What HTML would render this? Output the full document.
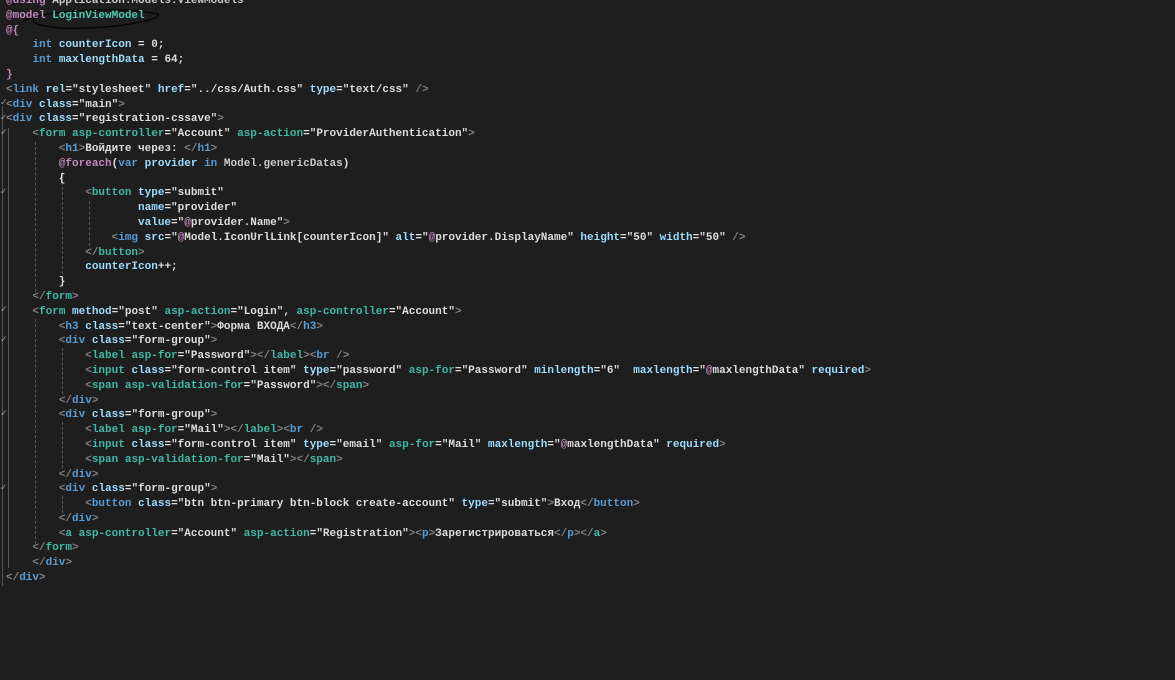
<!DOCTYPE html>
<html><head><meta charset="utf-8"><style>
html,body{margin:0;padding:0;background:#1e1e1e;width:1175px;height:680px;overflow:hidden;position:relative}
pre{position:absolute;left:6px;top:-6px;margin:0;font-family:"Liberation Mono","DejaVu Sans Mono",monospace;font-size:11px;line-height:14.8px;color:#dcdcdc;font-weight:bold;letter-spacing:0}
.d{color:#808080}.t{color:#569cd6}.h{color:#3fb8a8}.a{color:#9cdcfe}.s{color:#dcdcdc}.k{color:#569cd6}.r{color:#c586c0}.m{color:#c8c8c8}.g{color:#4ec9b0}
.v{position:absolute;width:0;border-left:1px dashed #5a5a5a}
.sl{position:absolute;width:1px;background:#555}
.ck{position:absolute;left:0;color:#9a9a9a;font:9px "DejaVu Sans",sans-serif}
</style></head><body>
<div class="sl" style="left:2px;top:106px;height:480px"></div>
<div class="sl" style="left:8px;top:128px;height:440px"></div>
<div class="v" style="left:35px;top:142px;height:150px"></div>
<div class="v" style="left:35px;top:319px;height:225px"></div>
<div class="v" style="left:62px;top:172px;height:112px"></div>
<div class="v" style="left:62px;top:348px;height:46px"></div>
<div class="v" style="left:62px;top:422px;height:46px"></div>
<div class="v" style="left:62px;top:496px;height:17px"></div>
<div class="v" style="left:89px;top:201px;height:45px"></div>
<span class="ck" style="top:98px">✓</span>
<span class="ck" style="top:113px">✓</span>
<span class="ck" style="top:128px">✓</span>
<span class="ck" style="top:187px">✓</span>
<span class="ck" style="top:305px">✓</span>
<span class="ck" style="top:335px">✓</span>
<span class="ck" style="top:409px">✓</span>
<span class="ck" style="top:483px">✓</span>
<svg style="position:absolute;left:0;top:0" width="200" height="40"><path d="M22 22 C40 10 120 6 158 14 C164 20 110 30 60 28 C38 26 28 22 36 18" fill="none" stroke="#000" stroke-width="1.3" opacity="0.85"/></svg>
<pre><span class="r">@using</span> <span class="m">Application.Models.ViewModels</span>
<span class="r">@model</span> <span class="g">LoginViewModel</span>
<span class="r">@{</span>
    <span class="k">int</span> <span class="a">counterIcon</span> = 0;
    <span class="k">int</span> <span class="a">maxlengthData</span> = 64;
<span class="r">}</span>
<span class="d">&lt;</span><span class="t">link</span> <span class="a">rel</span>=<span class="s">"stylesheet"</span> <span class="a">href</span>=<span class="s">"../css/Auth.css"</span> <span class="a">type</span>=<span class="s">"text/css"</span> <span class="d">/&gt;</span>
<span class="d">&lt;</span><span class="t">div</span> <span class="a">class</span>=<span class="s">"main"</span><span class="d">&gt;</span>
<span class="d">&lt;</span><span class="t">div</span> <span class="a">class</span>=<span class="s">"registration-cssave"</span><span class="d">&gt;</span>
    <span class="d">&lt;</span><span class="h">form</span> <span class="h">asp-controller</span>=<span class="s">"Account"</span> <span class="h">asp-action</span>=<span class="s">"ProviderAuthentication"</span><span class="d">&gt;</span>
        <span class="d">&lt;</span><span class="t">h1</span><span class="d">&gt;</span>Войдите через: <span class="d">&lt;/</span><span class="t">h1</span><span class="d">&gt;</span>
        <span class="r">@foreach</span>(<span class="k">var</span> <span class="a">provider</span> <span class="k">in</span> <span class="m">Model.genericDatas</span>)
        {
            <span class="d">&lt;</span><span class="h">button</span> <span class="a">type</span>=<span class="s">"submit"</span>
                    <span class="a">name</span>=<span class="s">"provider"</span>
                    <span class="a">value</span>=<span class="s">"<span class="r">@</span>provider.Name"</span><span class="d">&gt;</span>
                <span class="d">&lt;</span><span class="t">img</span> <span class="a">src</span>=<span class="s">"<span class="r">@</span>Model.IconUrlLink[counterIcon]"</span> <span class="a">alt</span>=<span class="s">"<span class="r">@</span>provider.DisplayName"</span> <span class="a">height</span>=<span class="s">"50"</span> <span class="a">width</span>=<span class="s">"50"</span> <span class="d">/&gt;</span>
            <span class="d">&lt;/</span><span class="h">button</span><span class="d">&gt;</span>
            <span class="a">counterIcon</span>++;
        }
    <span class="d">&lt;/</span><span class="h">form</span><span class="d">&gt;</span>
    <span class="d">&lt;</span><span class="h">form</span> <span class="a">method</span>=<span class="s">"post"</span> <span class="h">asp-action</span>=<span class="s">"Login"</span>, <span class="h">asp-controller</span>=<span class="s">"Account"</span><span class="d">&gt;</span>
        <span class="d">&lt;</span><span class="t">h3</span> <span class="a">class</span>=<span class="s">"text-center"</span><span class="d">&gt;</span>Форма ВХОДА<span class="d">&lt;/</span><span class="t">h3</span><span class="d">&gt;</span>
        <span class="d">&lt;</span><span class="t">div</span> <span class="a">class</span>=<span class="s">"form-group"</span><span class="d">&gt;</span>
            <span class="d">&lt;</span><span class="h">label</span> <span class="h">asp-for</span>=<span class="s">"Password"</span><span class="d">&gt;&lt;/</span><span class="h">label</span><span class="d">&gt;&lt;</span><span class="t">br</span> <span class="d">/&gt;</span>
            <span class="d">&lt;</span><span class="h">input</span> <span class="a">class</span>=<span class="s">"form-control item"</span> <span class="a">type</span>=<span class="s">"password"</span> <span class="h">asp-for</span>=<span class="s">"Password"</span> <span class="a">minlength</span>=<span class="s">"6"</span>  <span class="a">maxlength</span>=<span class="s">"<span class="r">@</span>maxlengthData"</span> <span class="a">required</span><span class="d">&gt;</span>
            <span class="d">&lt;</span><span class="h">span</span> <span class="h">asp-validation-for</span>=<span class="s">"Password"</span><span class="d">&gt;&lt;/</span><span class="h">span</span><span class="d">&gt;</span>
        <span class="d">&lt;/</span><span class="t">div</span><span class="d">&gt;</span>
        <span class="d">&lt;</span><span class="t">div</span> <span class="a">class</span>=<span class="s">"form-group"</span><span class="d">&gt;</span>
            <span class="d">&lt;</span><span class="h">label</span> <span class="h">asp-for</span>=<span class="s">"Mail"</span><span class="d">&gt;&lt;/</span><span class="h">label</span><span class="d">&gt;&lt;</span><span class="t">br</span> <span class="d">/&gt;</span>
            <span class="d">&lt;</span><span class="h">input</span> <span class="a">class</span>=<span class="s">"form-control item"</span> <span class="a">type</span>=<span class="s">"email"</span> <span class="h">asp-for</span>=<span class="s">"Mail"</span> <span class="a">maxlength</span>=<span class="s">"<span class="r">@</span>maxlengthData"</span> <span class="a">required</span><span class="d">&gt;</span>
            <span class="d">&lt;</span><span class="h">span</span> <span class="h">asp-validation-for</span>=<span class="s">"Mail"</span><span class="d">&gt;&lt;/</span><span class="h">span</span><span class="d">&gt;</span>
        <span class="d">&lt;/</span><span class="t">div</span><span class="d">&gt;</span>
        <span class="d">&lt;</span><span class="t">div</span> <span class="a">class</span>=<span class="s">"form-group"</span><span class="d">&gt;</span>
            <span class="d">&lt;</span><span class="t">button</span> <span class="a">class</span>=<span class="s">"btn btn-primary btn-block create-account"</span> <span class="a">type</span>=<span class="s">"submit"</span><span class="d">&gt;</span>Вход<span class="d">&lt;/</span><span class="t">button</span><span class="d">&gt;</span>
        <span class="d">&lt;/</span><span class="t">div</span><span class="d">&gt;</span>
        <span class="d">&lt;</span><span class="h">a</span> <span class="h">asp-controller</span>=<span class="s">"Account"</span> <span class="h">asp-action</span>=<span class="s">"Registration"</span><span class="d">&gt;&lt;</span><span class="t">p</span><span class="d">&gt;</span>Зарегистрироваться<span class="d">&lt;/</span><span class="t">p</span><span class="d">&gt;&lt;/</span><span class="h">a</span><span class="d">&gt;</span>
    <span class="d">&lt;/</span><span class="h">form</span><span class="d">&gt;</span>
    <span class="d">&lt;/</span><span class="t">div</span><span class="d">&gt;</span>
<span class="d">&lt;/</span><span class="t">div</span><span class="d">&gt;</span>
</pre>
</body></html>
